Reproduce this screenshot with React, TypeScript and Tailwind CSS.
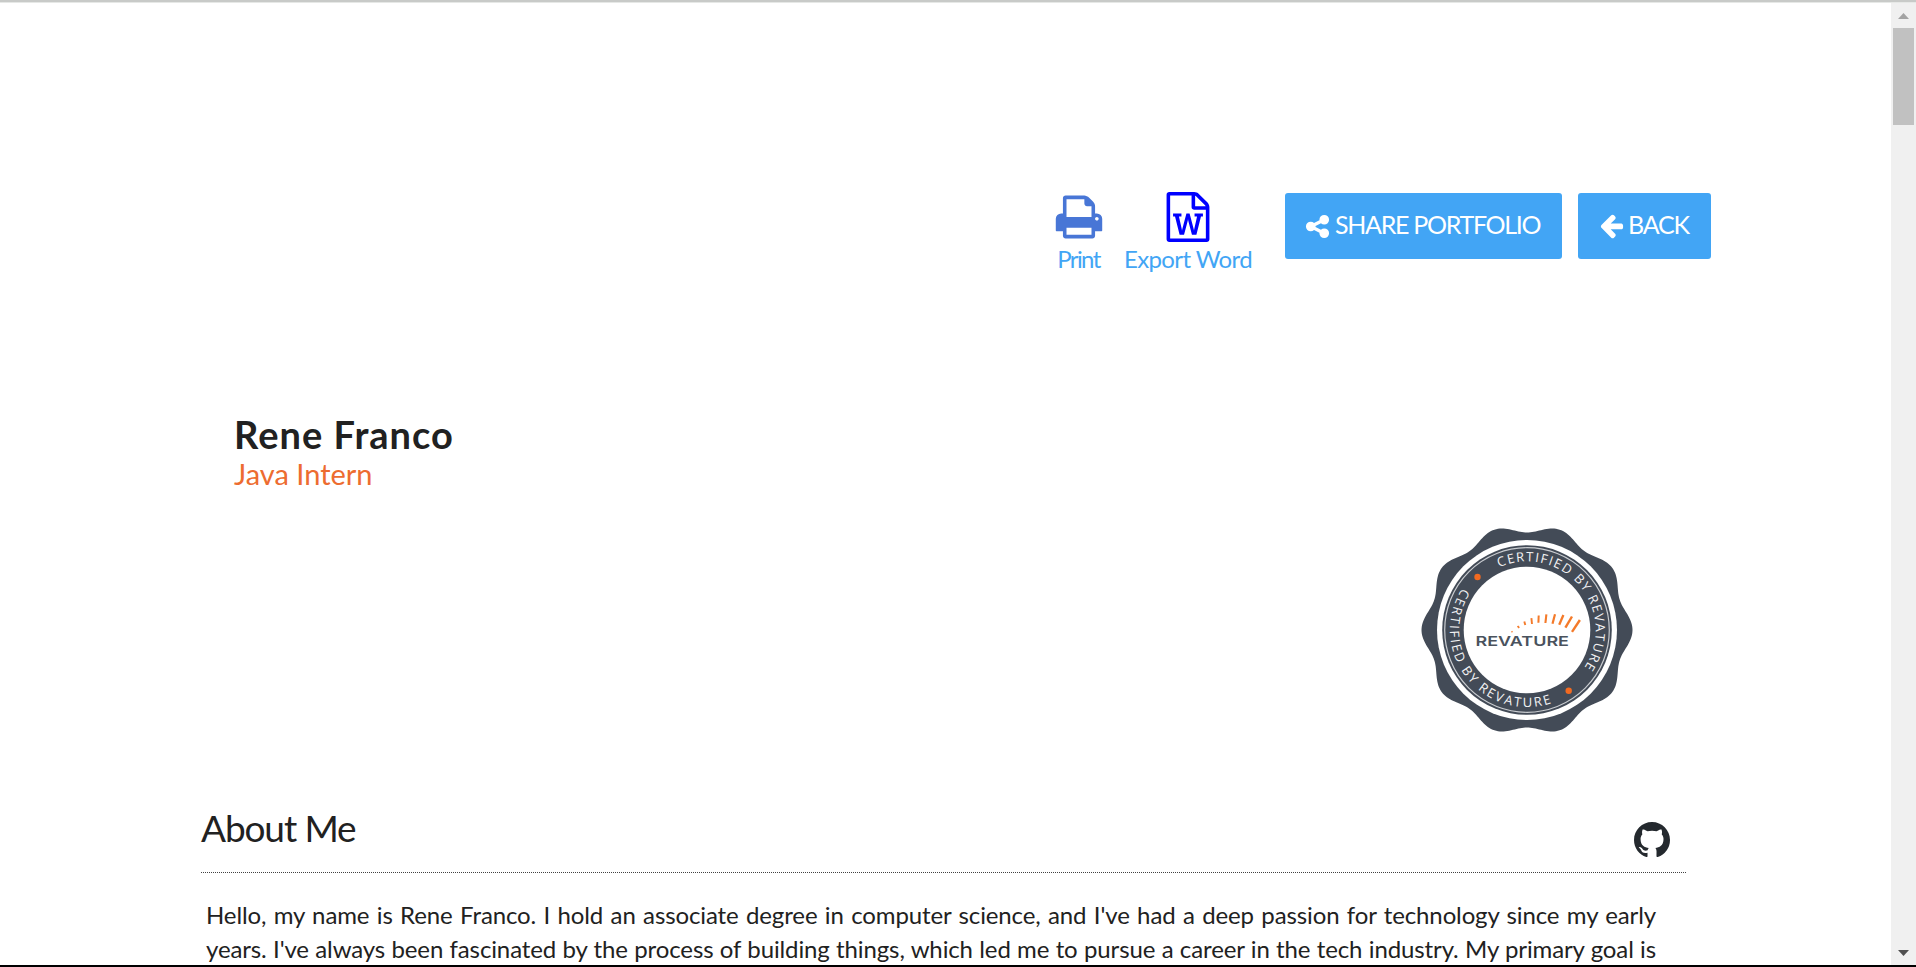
import React from "react";

const PRINT =
  "M448 1536h896v-256h-896v256zm0-640h896v-384h-160q-40 0-68-28t-28-68v-160h-640v640zm1152 64q0-26-19-45t-45-19-45 19-19 45 19 45 45 19 45-19 19-45zm128 0v416q0 13-9.5 22.5t-22.5 9.5h-224v160q0 40-28 68t-68 28h-960q-40 0-68-28t-28-68v-160h-224q-13 0-22.5-9.5t-9.5-22.5v-416q0-79 56.5-135.5t135.5-56.5h64v-544q0-40 28-68t68-28h672q40 0 88 20t76 48l152 152q28 28 48 76t20 88v256h64q79 0 135.5 56.5t56.5 135.5z";
const WORD =
  "M1596 380q28 28 48 76t20 88v1152q0 40-28 68t-68 28h-1344q-40 0-68-28t-28-68v-1600q0-40 28-68t68-28h896q40 0 88 20t76 48zm-444-244v376h376q-10-29-22-41l-313-313q-12-12-41-22zm384 1528v-1024h-416q-40 0-68-28t-28-68v-416h-768v1536h1280zm-1175-896v107h70l164 661h159l128-485q7-20 10-46 2-16 2-24h4l3 24q1 3 3.5 20t5.5 26l128 485h159l164-661h70v-107h-300v107h90l-99 438q-5 20-7 46l-2 21h-4l-3-21q-1-5-4-21t-5-25l-144-545h-114l-144 545q-2 9-4.5 24.5t-3.5 21.5l-4 21h-4l-2-21q-2-26-7-46l-99-438h90v-107h-300z";
const SHARE =
  "M1344 1024q133 0 226.5 93.5t93.5 226.5-93.5 226.5-226.5 93.5-226.5-93.5-93.5-226.5q0-12 2-34l-360-180q-92 86-218 86-133 0-226.5-93.5t-93.5-226.5 93.5-226.5 226.5-93.5q126 0 218 86l360-180q-2-22-2-34 0-133 93.5-226.5t226.5-93.5 226.5 93.5 93.5 226.5-93.5 226.5-226.5 93.5q-126 0-218-86l-360 180q2 22 2 34t-2 34l360 180q92-86 218-86z";
const ARROW =
  "M1664 896v128q0 53-32.5 90.5t-84.5 37.5h-704l293 294q38 36 38 90t-38 90l-75 76q-37 37-90 37-52 0-91-37l-651-652q-37-37-37-90 0-52 37-91l651-650q38-38 91-38 52 0 90 38l75 74q38 38 38 91t-38 91l-293 293h704q52 0 84.5 37.5t32.5 90.5z";
const GITHUB =
  "M8 0C3.58 0 0 3.58 0 8c0 3.54 2.29 6.53 5.47 7.59.4.07.55-.17.55-.38 0-.19-.01-.82-.01-1.49-2.01.37-2.53-.49-2.69-.94-.09-.23-.48-.94-.82-1.13-.28-.15-.68-.52-.01-.53.63-.01 1.08.58 1.23.82.72 1.21 1.87.87 2.33.66.07-.52.28-.87.51-1.07-1.78-.2-3.64-.89-3.64-3.95 0-.87.31-1.59.82-2.15-.08-.2-.36-1.02.08-2.12 0 0 .67-.21 2.2.82.64-.18 1.32-.27 2-.27.68 0 1.36.09 2 .27 1.53-1.04 2.2-.82 2.2-.82.44 1.1.16 1.92.08 2.12.51.56.82 1.27.82 2.15 0 3.07-1.87 3.75-3.65 3.95.29.25.54.73.54 1.48 0 1.07-.01 1.93-.01 2.2 0 .21.15.46.55.38A8.013 8.013 0 0016 8c0-4.42-3.58-8-8-8z";

function Glyph({ d, className, box = "0 0 1792 1792" }: { d: string; className: string; box?: string }) {
  return (
    <svg viewBox={box} className={className} fill="currentColor" aria-hidden="true">
      <path d={d} />
    </svg>
  );
}

const scallop =
  "M" +
  Array.from({ length: 360 }, (_, i) => {
    const a = (i * Math.PI) / 180;
    const r = 101.5 + 4 * Math.cos(10 * a);
    return `${(r * Math.cos(a)).toFixed(2)} ${(r * Math.sin(a)).toFixed(2)}`;
  }).join("L") +
  "Z";

const rays: [number, number, number, number, number][] = [
  [-15.5, 2.2, -14.5, 1.2, 1.3],
  [-9.4, -4, -7.8, -2.2, 1.8],
  [-2.7, -8.5, -1.7, -5, 1.9],
  [4.4, -11.8, 5, -6, 1.9],
  [11.7, -14.5, 11.4, -7.3, 2],
  [19.4, -15.7, 18.4, -7, 2.1],
  [28, -15.7, 25.5, -6.3, 2.2],
  [36.4, -15, 32.2, -5.3, 2.3],
  [45, -13.5, 38.4, -2.3, 2.4],
  [52.9, -10, 45, 1.9, 2.4],
];

function Badge() {
  return (
    <svg viewBox="-106 -103 212 206" className="h-[206px] w-[212px]" aria-label="Certified by Revature">
      <defs>
        <path id="arc-top" d="M-27.9 -62.6A68.5 68.5 0 0 1 34.25 59.3" />
        <path id="arc-bottom" d="M-64.6 -41.9A77 77 0 0 0 59 49.5" />
      </defs>
      <path d={scallop} fill="#434b57" />
      <circle r="90" fill="#fff" />
      <circle r="84.8" fill="#434b57" />
      <circle r="82.3" fill="none" stroke="#c9ccd0" strokeWidth="1.2" />
      <circle r="63.3" fill="#fff" />
      <g fill="#f3f3f4" fontFamily="'Open Sans', sans-serif" fontSize="13">
        <text textLength="176" lengthAdjust="spacing">
          <textPath href="#arc-top">CERTIFIED BY REVATURE</textPath>
        </text>
        <text textLength="190" lengthAdjust="spacing">
          <textPath href="#arc-bottom">CERTIFIED BY REVATURE</textPath>
        </text>
      </g>
      <circle cx="-49.5" cy="-53" r="3.2" fill="#f26a21" />
      <circle cx="41.7" cy="60.7" r="3.2" fill="#f26a21" />
      {rays.map(([x1, y1, x2, y2, w], i) => (
        <line key={i} x1={x1} y1={y1} x2={x2} y2={y2} stroke="#f47a2a" strokeWidth={w} />
      ))}
      <text x="-51.5" y="15.9" fontFamily="Inter, sans-serif" fontSize="13.2" fontWeight="600" fill="#4a525d" textLength="93.5" lengthAdjust="spacingAndGlyphs">
        REVATURE
      </text>
    </svg>
  );
}

export default function App() {
  return (
    <div className="flex h-[967px] w-[1916px] flex-col overflow-hidden border-b-2 border-black bg-white font-['Lato',sans-serif] text-[#212121]">
      <div className="h-[3px] shrink-0 border-b border-[#e6e8e6] bg-[#c8cac8]" />
      <div className="flex min-h-0 flex-1">
        <main className="min-w-0 flex-1 overflow-hidden">
          <div className="flex h-[190px] items-start justify-end pt-[190px] pr-[180px] text-[#42a5f5]">
            <a className="mr-[22px] flex w-[47px] flex-col items-center">
              <Glyph d={PRINT} className="-mt-[1px] h-[50px] w-[50px] text-[#4876d6]" />
              <span className="text-[24px] leading-[33px] tracking-[-1.6px] whitespace-nowrap">Print</span>
            </a>
            <a className="mr-[33px] flex w-[128px] flex-col items-center">
              <Glyph d={WORD} className="-mt-[1px] h-[50px] w-[50px] text-[#0000ff]" />
              <span className="text-[24px] leading-[33px] tracking-[-0.6px] whitespace-nowrap">Export Word</span>
            </a>
            <button className="mr-4 flex h-[66px] w-[277px] items-center rounded-[3px] bg-[#42a5f5] pl-[19px] text-white">
              <Glyph d={SHARE} className="h-[27px] w-[27px]" />
              <span className="ml-[4px] pb-[2px] text-[25px] tracking-[-1.3px] whitespace-nowrap">SHARE PORTFOLIO</span>
            </button>
            <button className="flex h-[66px] w-[133px] items-center rounded-[3px] bg-[#42a5f5] pl-[20px] text-white">
              <Glyph d={ARROW} className="-mt-[1px] h-[27px] w-[27px]" />
              <span className="ml-[3px] pb-[2px] text-[25px] tracking-[-1.2px] whitespace-nowrap">BACK</span>
            </button>
          </div>
          <header className="mt-[221px] ml-[234px]">
            <h1 className="text-[38px] leading-[40px] font-bold tracking-[1px]">Rene Franco</h1>
            <p className="text-[29px] leading-[40px] text-[#ed6c30]">Java Intern</p>
          </header>
          <div className="mt-[33px] flex justify-end pr-[258px]">
            <Badge />
          </div>
          <section className="mt-[63px] ml-[201px] w-[1485px]">
            <div className="flex h-[77px] justify-between border-b border-dotted border-[#424242]">
              <h2 className="pt-[9px] text-[37px] leading-[46px] tracking-[-1.1px]">About Me</h2>
              <Glyph d={GITHUB} box="0 0 16 16" className="mt-[26px] mr-[16px] h-[36px] w-[36px] text-[#24292e]" />
            </div>
            <div className="mt-[25px] ml-[5px] w-[1450px] text-[24px] leading-[34px] tracking-[-0.12px] whitespace-nowrap">
              <p className="[text-align-last:justify]">
                Hello, my name is Rene Franco. I hold an associate degree in computer science, and I've had a deep passion for technology since my early
              </p>
              <p className="[text-align-last:justify]">
                years. I've always been fascinated by the process of building things, which led me to pursue a career in the tech industry. My primary goal is
              </p>
            </div>
          </section>
        </main>
        <aside className="flex w-[25px] shrink-0 flex-col items-center bg-[#f0f0f0]">
          <svg viewBox="0 0 11 6" className="mt-[10px] h-[6px] w-[11px]" fill="#a3a3a3">
            <path d="M5.5 0L11 6H0z" />
          </svg>
          <div className="mt-[9px] mr-[1px] h-[97px] w-[21px] bg-[#c1c1c1]" />
          <svg viewBox="0 0 11 6" className="mt-auto mb-[9px] h-[6px] w-[11px]" fill="#505050">
            <path d="M5.5 6L11 0H0z" />
          </svg>
        </aside>
      </div>
    </div>
  );
}
